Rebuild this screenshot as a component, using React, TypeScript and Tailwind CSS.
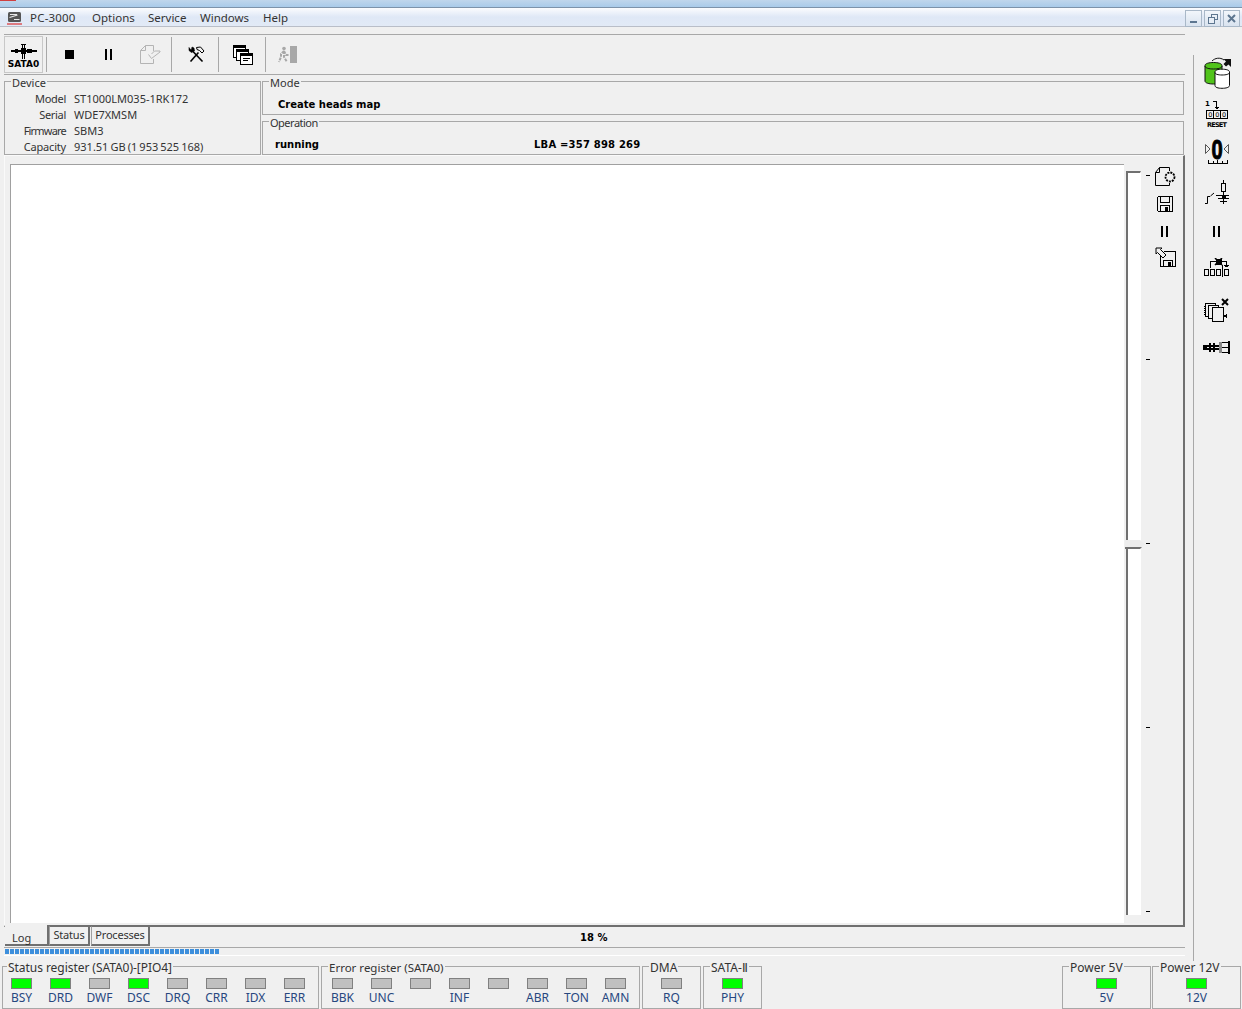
const statusLeds = [
  { label: 'BSY', on: true },
  { label: 'DRD', on: true },
  { label: 'DWF', on: false },
  { label: 'DSC', on: true },
  { label: 'DRQ', on: false },
  { label: 'CRR', on: false },
  { label: 'IDX', on: false },
  { label: 'ERR', on: false },
];

const errorLeds = [
  { label: 'BBK', on: false },
  { label: 'UNC', on: false },
  { label: '', on: false },
  { label: 'INF', on: false },
  { label: '', on: false },
  { label: 'ABR', on: false },
  { label: 'TON', on: false },
  { label: 'AMN', on: false },
];

const deviceRows = [
  { label: 'Model', value: 'ST1000LM035-1RK172', tracking: 'tracking-[-0.3px]' },
  { label: 'Serial', value: 'WDE7XMSM', tracking: 'tracking-[-0.3px]' },
  { label: 'Firmware', value: 'SBM3', tracking: 'tracking-[-0.8px]' },
  { label: 'Capacity', value: '931.51 GB (1 953 525 168)', tracking: 'tracking-[-0.2px]' },
];

const progressSegments = Array.from({ length: 43 }, (_, i) => i);
const ticks = [0, 1, 2, 3, 4];

const boldFont = { fontFamily: '"DejaVu Sans", sans-serif' };

const Legend = ({
  text,
  className = 'left-[6px] text-[12px]',
}: {
  text: string;
  className?: string;
}) => (
  <span className={`absolute -top-[6px] bg-[#f0f0f0] px-px font-normal leading-[14px] text-[#333] ${className}`}>
    {text}
  </span>
);

const Led = ({ label, on }: { label: string; on: boolean }) => (
  <div className="flex w-[39px] flex-col items-center">
    <div className={`h-[11px] w-[21px] border border-[#808080] ${on ? 'bg-[#00ff00]' : 'bg-[#c0c0c0]'}`} />
    <span className="mt-[1px] h-[16px] text-[12px] leading-[16px] text-[#27477f]">{label}</span>
  </div>
);

const Separator = ({ className }: { className: string }) => (
  <div className={`h-[35px] w-px bg-[#a8a8a8] ${className}`} />
);

const PauseIcon = ({ className = '' }: { className?: string }) => (
  <svg width="8" height="11" viewBox="0 0 8 11" className={className} shapeRendering="crispEdges">
    <rect x="0" y="0" width="2" height="11" fill="#000" />
    <rect x="5" y="0" width="2" height="11" fill="#000" />
  </svg>
);

const AppIcon = () => (
  <svg width="15" height="15" viewBox="0 0 15 15" className="ml-[7px]">
    <rect x="1" y="1" width="13" height="10" rx="1.5" fill="#555" />
    <path d="M3 3.5h7M2.5 6.5l8-2.5M7 8.5h5.5" stroke="#e8e8e8" strokeWidth="1.2" />
    <rect x="0" y="12.4" width="15" height="1.2" fill="#d33" />
  </svg>
);

const WindowButton = ({ children }: { children: React.ReactNode }) => (
  <div className="flex h-[17px] w-[17px] items-center justify-center border border-[#a9b8c8] bg-gradient-to-b from-[#f2f6fb] to-[#d9e3ef]">
    {children}
  </div>
);

const SataIcon = () => (
  <svg width="28" height="16" viewBox="0 0 28 16" shapeRendering="crispEdges">
    <rect x="1" y="6" width="26" height="2" fill="#000" />
    <rect x="5" y="5" width="3" height="4" fill="#000" />
    <rect x="17" y="5" width="5" height="4" fill="#000" />
    <rect x="11" y="4" width="5" height="6" fill="#000" />
    <rect x="12" y="0" width="1" height="15" fill="#000" />
    <rect x="14" y="0" width="1" height="15" fill="#000" />
    <rect x="11" y="0" width="5" height="1" fill="#000" />
  </svg>
);

const DocCheckIcon = () => (
  <svg width="21" height="19" viewBox="0 0 21 19" className="ml-[27px]" fill="none" stroke="#b4b4b4">
    <path d="M0.5 5.5 5.5 0.5H13.5V6M0.5 5.5V18.5H13.5V14M0.5 5.5H5.5V0.5" />
    <path d="M8.5 9.5 11.5 13.5 20 7V6H14.5L11.5 9" fill="#f0f0f0" />
  </svg>
);

const ToolsIcon = () => (
  <svg width="17" height="17" viewBox="0 0 17 17" className="ml-[16px]" fill="none" stroke="#000">
    <path d="M2.5 15.5 10.5 6.5" strokeWidth="1.6" />
    <path d="M8.5 1.5 12.5 1 16 5 14 7 11.5 4.5 9 3.5Z" fill="#f0f0f0" strokeWidth="1" />
    <path d="M14.5 15.5 5 5.5" strokeWidth="1.6" />
    <path d="M1 1.5 1 4.5 3.5 6.5 6.5 5 6 2 4 1 3.5 3.5 2.5 3.5Z" fill="#000" strokeWidth="0.6" />
  </svg>
);

const WindowsIcon = () => (
  <svg width="20" height="20" viewBox="0 0 20 20" className="ml-[14px]" shapeRendering="crispEdges">
    <rect x="0.5" y="0.5" width="12" height="12" fill="#fff" stroke="#000" />
    <rect x="1" y="1" width="11" height="2" fill="#000" />
    <rect x="3.5" y="4.5" width="12" height="11" fill="#fff" stroke="#000" />
    <rect x="4" y="5" width="11" height="2" fill="#000" />
    <rect x="7.5" y="8.5" width="12" height="11" fill="#fff" stroke="#000" />
    <rect x="8" y="9" width="11" height="2" fill="#000" />
    <rect x="10" y="13" width="7" height="1" fill="#000" />
    <rect x="10" y="15" width="5" height="1" fill="#000" />
  </svg>
);

const ExitIcon = () => (
  <svg width="20" height="18" viewBox="0 0 20 18" className="ml-[12px]">
    <rect x="12" y="0" width="7" height="17" fill="#a8a8a8" />
    <circle cx="6" cy="2.5" r="1.8" fill="#a8a8a8" />
    <path d="M6 5 3 8V11L1 16M6 5 8 9 11 9M6 5V11L9 16" stroke="#a8a8a8" strokeWidth="2" fill="none" strokeDasharray="3 1" />
  </svg>
);

const GearDocIcon = () => (
  <svg width="21" height="19" viewBox="0 0 21 19" fill="none" stroke="#000">
    <path d="M0.5 5.5 4.5 0.5H14.5V4M0.5 5.5V18.5H14.5V16M0.5 5.5H4.5V0.5" />
    <circle cx="15" cy="10" r="4.5" strokeDasharray="2 1" strokeWidth="1.8" fill="#f0f0f0" />
  </svg>
);

const FloppyIcon = () => (
  <svg width="16" height="16" viewBox="0 0 16 16" fill="none" stroke="#000" shapeRendering="crispEdges">
    <path d="M0.5 1.5 1.5 0.5H15.5V15.5H1.5L0.5 14.5Z" />
    <rect x="3.5" y="0.5" width="9" height="5.5" />
    <rect x="3.5" y="9.5" width="9" height="6" />
    <rect x="8" y="11" width="3" height="4" fill="#000" stroke="none" />
  </svg>
);

const FloppyArrowIcon = () => (
  <svg width="21" height="20" viewBox="0 0 21 20" fill="none" stroke="#000" shapeRendering="crispEdges">
    <path d="M8.5 4.5H20.5V19.5H5.5V9" />
    <rect x="8.5" y="13.5" width="9" height="6" />
    <rect x="13" y="15" width="3" height="4" fill="#000" stroke="none" />
    <path d="M1 1H7L5.5 2.5 11 8 8 11 2.5 5.5 1 7Z" fill="#f0f0f0" shapeRendering="auto" />
  </svg>
);

const DriveSwapIcon = () => (
  <svg width="30" height="32" viewBox="0 0 30 32" className="mt-[2px]">
    <path d="M3 8.5V24C3 26 7 27 11.5 27S20 26 20 24V8.5C20 6.5 16 5.5 11.5 5.5S3 6.5 3 8.5Z" fill="#51c41b" stroke="#111" />
    <path d="M3 9C3 11 7 12 11.5 12S20 11 20 9" fill="none" stroke="#111" />
    <path d="M13 15V28.5C13 30.4 16 31.3 20 31.3S27.5 30.4 27.5 28.5V15C27.5 13 24 12.2 20 12.2S13 13 13 15Z" fill="#fff" stroke="#111" />
    <path d="M13 15.5C13 17.2 16 18 20 18S27.5 17.2 27.5 15.5" fill="none" stroke="#111" />
    <path d="M10 4C13 1 18 0 22 3" fill="none" stroke="#111" />
    <path d="M29 2V10L26.5 7.5 24 9.5 21.5 7 24 4.5 21.5 2Z" fill="#111" />
  </svg>
);

const ResetIcon = () => (
  <svg width="24" height="28" viewBox="0 0 24 28" className="mt-[10px]" style={boldFont} shapeRendering="crispEdges">
    <text x="0" y="7" fontSize="7" fontWeight="bold">1</text>
    <path d="M11.5 2V10M9.5 8H13.5M10.5 9H12.5M8 2H11" stroke="#000" fill="none" />
    <rect x="1.5" y="11.5" width="21" height="8" fill="none" stroke="#000" />
    <path d="M8.5 11.5V19.5M15.5 11.5V19.5" stroke="#000" />
    <text x="3.2" y="18" fontSize="6.5">0</text>
    <text x="10.2" y="18" fontSize="6.5">0</text>
    <text x="17" y="18" fontSize="6.5">0</text>
    <text x="2" y="27.5" fontSize="6.5" fontWeight="bold" textLength="20">RESET</text>
  </svg>
);

const ZeroIcon = () => (
  <svg width="26" height="33" viewBox="0 -6 26 33" className="mt-[5px]" style={{ fontFamily: '"Liberation Sans", sans-serif' }}>
    <path d="M1.5 6.5 6 11 1.5 15.5Z" fill="none" stroke="#555" />
    <path d="M24.5 6.5 20 11 24.5 15.5Z" fill="none" stroke="#555" />
    <text transform="translate(13 20.5) scale(0.72 1)" fontSize="28" fontWeight="bold" textAnchor="middle" stroke="#000" strokeWidth="1">0</text>
    <path d="M4 25.5H23.5M4.5 22V25M9 23V25M13.5 22V25M18 23V25M23 22V25" stroke="#000" fill="none" shapeRendering="crispEdges" />
  </svg>
);

const SwitchIcon = () => (
  <svg width="26" height="25" viewBox="0 0 26 25" className="mt-[15px]" fill="none" stroke="#000" shapeRendering="crispEdges">
    <path d="M1 23.5H3.5V16.5H6M6.5 16 10 13" shapeRendering="auto" />
    <rect x="17.5" y="3.5" width="4" height="8" />
    <path d="M19.5 0V3M19.5 12V16M19.5 18V24M12 15.5H25M14 18.5H25M16 21.5H23" />
    <rect x="18" y="15" width="3" height="3" fill="#000" />
  </svg>
);

const RelayIcon = () => (
  <svg width="25" height="21" viewBox="0 0 25 21" className="mt-[21px]" fill="none" stroke="#000" shapeRendering="crispEdges">
    <path d="M6.5 10V3.5H22.5V8M20 7.5H25M21 8.5H24" />
    <rect x="12" y="1" width="5" height="5" fill="#000" />
    <path d="M11 0 18 7M18 0 11 7" shapeRendering="auto" strokeWidth="1.5" />
    <rect x="0.5" y="11.5" width="4" height="5.5" />
    <rect x="6.5" y="11.5" width="4" height="5.5" />
    <rect x="12.5" y="11.5" width="4" height="5.5" />
    <rect x="20.5" y="11.5" width="4" height="5.5" />
    <path d="M18.5 7V19" />
  </svg>
);

const PagesIcon = () => (
  <svg width="25" height="24" viewBox="0 0 25 24" className="mt-[19px]" fill="none" stroke="#000" shapeRendering="crispEdges">
    <rect x="1.5" y="5.5" width="10" height="13" fill="#f0f0f0" />
    <path d="M0 8H2M0 10H2M0 12H2M0 14H2M0 16H2" />
    <rect x="4.5" y="7.5" width="10" height="13" fill="#f0f0f0" />
    <rect x="8.5" y="9.5" width="11" height="14" fill="#f0f0f0" />
    <path d="M19 18H23M22.5 16V20" strokeWidth="1.5" />
    <path d="M18 1 24 7M24 1 18 7" strokeWidth="2" shapeRendering="auto" />
  </svg>
);

const CableIcon = () => (
  <svg width="27" height="13" viewBox="0 0 27 13" className="mt-[19px]" shapeRendering="crispEdges">
    <rect x="0" y="4" width="17" height="5" fill="#000" />
    <rect x="4" y="6" width="12" height="1" fill="#f0f0f0" />
    <rect x="6" y="2" width="2" height="9" fill="#000" />
    <rect x="10" y="2" width="2" height="9" fill="#000" />
    <rect x="16" y="1" width="3" height="11" fill="#888" />
    <rect x="19" y="1" width="7" height="1" fill="#000" />
    <rect x="19" y="6" width="7" height="1" fill="#000" />
    <rect x="19" y="11" width="7" height="1" fill="#000" />
    <rect x="25" y="0" width="2" height="13" fill="#000" />
  </svg>
);

export default function App() {
  return (
    <div
      className="flex h-[1009px] w-[1242px] flex-col overflow-hidden bg-[#f0f0f0] text-[12px] text-[#333]"
      style={{ fontFamily: '"Noto Sans", sans-serif' }}
    >
      {/* title strip */}
      <div className="h-[8px] border-b border-[#7d93aa] bg-gradient-to-b from-[#c0d6ec] to-[#a9cbe9]">
        <div className="h-[1px] w-[16px] bg-[#d04040]" />
      </div>

      {/* menu */}
      <div className="flex h-[19px] items-center justify-between border-b border-[#b9bec8] bg-gradient-to-b from-[#fbfcfe] via-[#dfe8f6] to-[#e2eaf6] pr-[2px]">
        <div className="flex items-center pt-[2px] text-[11.5px]">
          <AppIcon />
          <span className="ml-[8px] w-[62px] tracking-[0.2px]">PC-3000</span>
          <span className="w-[56px]">Options</span>
          <span className="w-[52px]">Service</span>
          <span className="w-[63px]">Windows</span>
          <span>Help</span>
        </div>
        <div className="mt-[3px] flex gap-[2px]">
          <WindowButton>
            <div className="mt-[7px] h-[2px] w-[7px] bg-[#5d7690]" />
          </WindowButton>
          <WindowButton>
            <svg width="10" height="10" viewBox="0 0 10 10" fill="none" stroke="#5d7690" shapeRendering="crispEdges">
              <rect x="3.5" y="0.5" width="6" height="5" />
              <rect x="0.5" y="3.5" width="6" height="6" fill="#e8eef6" />
            </svg>
          </WindowButton>
          <WindowButton>
            <svg width="9" height="9" viewBox="0 0 9 9" stroke="#5d7690" strokeWidth="2">
              <path d="M1 1 8 8M8 1 1 8" />
            </svg>
          </WindowButton>
        </div>
      </div>

      <div className="flex min-h-0 flex-1">
        <div className="flex w-[1193px] flex-col pl-[4px] pr-[8px] pt-[7px]">
          {/* toolbar */}
          <div className="flex h-[41px] items-center border-y border-[#a8a8a8]">
            <div className="flex h-[37px] w-[39px] flex-col items-center border border-[#c8c8c8] pt-[7px]">
              <SataIcon />
              <span className="-mt-[1px] text-[9px] font-bold leading-[11px] text-black" style={boldFont}>
                SATA0
              </span>
            </div>
            <Separator className="ml-[3px]" />
            <div className="ml-[18px] h-[9px] w-[9px] bg-black" />
            <PauseIcon className="ml-[31px]" />
            <DocCheckIcon />
            <Separator className="ml-[10px]" />
            <ToolsIcon />
            <Separator className="ml-[13px]" />
            <WindowsIcon />
            <Separator className="ml-[12px]" />
            <ExitIcon />
          </div>

          {/* device info */}
          <div className="mt-[6px] flex h-[74px]">
            <div className="relative w-[257px] border border-[#a8a8a8] pt-[9px] text-[11px]">
              <Legend text="Device" className="left-[6px] text-[11px]" />
              {deviceRows.map((row) => (
                <div key={row.label} className="flex h-[16px] leading-[16px]">
                  <span className={`w-[61px] text-right ${row.tracking}`}>{row.label}</span>
                  <span className="ml-[8px] [word-spacing:-0.8px]">{row.value}</span>
                </div>
              ))}
            </div>
            <div className="ml-px flex flex-1 flex-col justify-between pr-px">
              <div className="relative h-[34px] border border-[#a8a8a8] pl-[15px] pt-[15px]">
                <Legend text="Mode" className="left-[6px] text-[11px]" />
                <div className="text-[10px] font-bold leading-[16px] text-black" style={boldFont}>
                  Create heads map
                </div>
              </div>
              <div
                className="relative flex h-[34px] border border-[#a8a8a8] pl-[12px] pt-[15px] text-[10px] font-bold leading-[16px] text-black"
                style={boldFont}
              >
                <span style={{ fontFamily: '"Noto Sans", sans-serif' }}>
                  <Legend text="Operation" className="left-[6px] text-[11px] tracking-[-0.5px]" />
                </span>
                <span className="w-[259px]">running</span>
                <span className="tracking-[0.2px]">LBA =357 898 269</span>
              </div>
            </div>
          </div>

          {/* main panel */}
          <div className="flex h-[772px] items-start border-b-2 border-l border-r-2 border-t border-b-[#707070] border-l-[#fafafa] border-r-[#707070] border-t-[#fafafa] pl-[5px]">
            <div className="mt-[8px] h-[759px] w-[1114px] border-l border-t border-[#a0a0a0] bg-white" />
            <div className="relative ml-[2px] mt-[15px] h-[744px] w-[15px] border-l-2 border-r border-t-2 border-l-[#707070] border-r-white border-t-[#707070] bg-white">
              <div className="absolute -left-[3px] top-[367px] h-[9px] w-[20px] border-b-2 border-[#707070] bg-[#ececec] [clip-path:polygon(0_0,75%_0,100%_45%,75%_100%,0_100%)]" />
            </div>
            <div className="ml-[5px] mt-[19px] flex h-[737px] w-[4px] flex-col justify-between">
              {ticks.map((tick) => (
                <div key={tick} className="h-px w-[4px] bg-black" />
              ))}
            </div>
            <div className="ml-[2px] mt-[11px] flex w-[26px] flex-col items-center">
              <GearDocIcon />
              <div className="mt-[10px]">
                <FloppyIcon />
              </div>
              <PauseIcon className="mt-[14px]" />
              <div className="mt-[10px]">
                <FloppyArrowIcon />
              </div>
            </div>
          </div>

          {/* tabs */}
          <div className="-mt-[2px] flex h-[22px] items-start text-[11px]">
            <div className="z-10 ml-px h-[21px] w-[44px] border-b-2 border-r-2 border-[#707070] bg-[#f0f0f0] pl-[7px] pt-[5px] leading-[16px]">
              Log
            </div>
            <div className="mt-px flex h-[20px] w-[41px] items-center justify-center border-2 border-l border-t border-[#707070] border-l-[#a0a0a0] tracking-[-0.2px]">
              Status
            </div>
            <div className="ml-px mt-px flex h-[20px] w-[59px] items-center justify-center border-2 border-l border-t border-[#707070] border-l-[#a0a0a0] tracking-[-0.2px]">
              Processes
            </div>
            <span className="ml-[430px] mt-[5px] text-[10px] font-bold leading-[16px] text-black" style={boldFont}>
              18 %
            </span>
          </div>

          {/* progress */}
          <div className="flex h-[9px] gap-px border-b border-t border-b-white border-t-[#a8a8a8] pl-px pt-px">
            {progressSegments.map((segment) => (
              <div key={segment} className="h-[5px] w-[4px] bg-[#3d8fdc]" />
            ))}
          </div>
        </div>

        {/* right tool strip */}
        <div className="mt-[28px] flex flex-1 flex-col items-center border-l border-[#a8a8a8] pr-[3px]">
          <DriveSwapIcon />
          <ResetIcon />
          <ZeroIcon />
          <SwitchIcon />
          <PauseIcon className="ml-px mt-[21px]" />
          <RelayIcon />
          <PagesIcon />
          <CableIcon />
        </div>
      </div>

      {/* registers */}
      <div className="flex h-[48px] pl-[2px] pr-px pt-[5px]">
        <div className="relative flex h-[43px] w-[317px] border border-[#a8a8a8] pt-[11px]">
          <Legend text="Status register (SATA0)-[PIO4]" className="left-[4px] text-[12px] tracking-[-0.05px]" />
          <div className="-ml-px flex">
            {statusLeds.map((led) => (
              <Led key={led.label} label={led.label} on={led.on} />
            ))}
          </div>
        </div>
        <div className="relative ml-[2px] flex h-[43px] w-[319px] border border-[#a8a8a8] pl-px pt-[11px]">
          <Legend text="Error register (SATA0)" className="left-[6px] text-[11.5px]" />
          {errorLeds.map((led, i) => (
            <Led key={i} label={led.label} on={led.on} />
          ))}
        </div>
        <div className="relative ml-[2px] flex h-[43px] w-[59px] justify-center border border-[#a8a8a8] pt-[11px]">
          <Legend text="DMA" />
          <Led label="RQ" on={false} />
        </div>
        <div className="relative ml-[2px] flex h-[43px] w-[59px] justify-center border border-[#a8a8a8] pt-[11px]">
          <Legend text="SATA-Ⅱ" />
          <Led label="PHY" on={true} />
        </div>
        <div className="relative ml-auto flex h-[43px] w-[89px] justify-center border border-[#a8a8a8] pt-[11px]">
          <Legend text="Power 5V" />
          <Led label="5V" on={true} />
        </div>
        <div className="relative ml-px flex h-[43px] w-[89px] justify-center border border-[#a8a8a8] pt-[11px]">
          <Legend text="Power 12V" />
          <Led label="12V" on={true} />
        </div>
      </div>
    </div>
  );
}
